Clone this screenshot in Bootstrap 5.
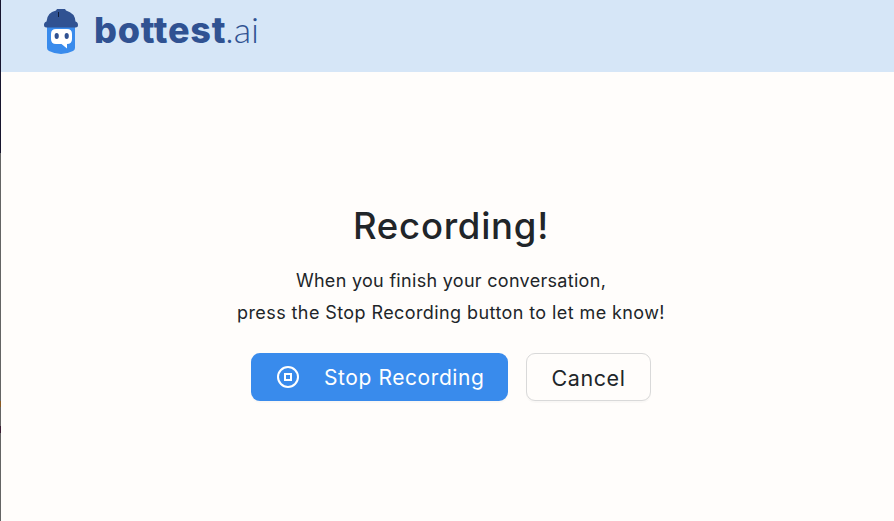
<!DOCTYPE html>
<html lang="en">
<head>
<meta charset="utf-8">
<meta name="viewport" content="width=device-width, initial-scale=1">
<title>bottest.ai</title>
<link href="https://cdn.jsdelivr.net/npm/bootstrap@5.3.0/dist/css/bootstrap.min.css" rel="stylesheet">
<style>
body{background:#fffdfb;color:#212529;font-family:Inter,"Open Sans",sans-serif;height:521px;overflow:hidden}
.edge{width:1px;background:linear-gradient(#17152e 0 153px,#646464 153px 401px,#8a5a22 401px 407px,#646464 407px 426px,#3b1d33 426px 433px,#646464 433px)}
.topbar{height:72px;background:#d6e6f7;padding-left:41px}
.brand{color:#305292;font-size:35px;line-height:46px;margin-left:15px;padding-top:6px}
.brand-a{font-weight:800;font-size:36px;letter-spacing:.75px}
.brand-b{font-family:Lato,sans-serif;font-weight:300;font-size:36px;margin-left:-1px}
.logo{margin-top:8px}
.content{padding:131px 0 0 7px}
.title{font-size:36.5px;line-height:46px;font-weight:500;letter-spacing:.75px}
.msg{font-size:18px;line-height:32px;font-weight:400;margin-top:16px}
.msg span{display:block}
.l1{letter-spacing:.3px}
.l2{letter-spacing:.41px}
.actions{gap:18px;margin-top:24px}
.act{height:48px;border-radius:9px;font-size:21px;line-height:24px;box-shadow:0 2px 1px rgba(0,0,0,.025);padding:2px 0 0}
.stop{width:257px;background:#398bec;color:#fff;padding-left:25px;letter-spacing:.58px}
.stop:hover{background:#2b7cdd;color:#fff}
.stop svg{margin:-2px 24px 0 0}
.cancel{width:125px;background:#fffdfb;border:1px solid #d9d9d9;font-size:21.5px;font-weight:400;letter-spacing:.6px}
</style>
<script src="https://cdn.jsdelivr.net/npm/bootstrap@5.3.0/dist/js/bootstrap.bundle.min.js"></script>
</head>
<body class="d-flex">
<div class="edge flex-shrink-0"></div>
<div class="flex-grow-1">
<header class="topbar d-flex align-items-start">
<svg class="logo" width="37" height="46" viewBox="42 8 37 46" aria-hidden="true">
<path d="M47 27H75V48Q75 50 73 51Q61 57 49 51Q47 50 47 48Z" fill="#398bec"/>
<path d="M46.500 21.500Q47 12.500 56 10.500L57 9H65L66 10.500Q75 13 75.500 21.500Q78 22 78 25Q78 27.500 75.500 27.500H46.500Q44 27.500 44 25Q44 22 46.500 21.500Z" fill="#305292"/>
<path d="M58.500 12V17" stroke="#101c38" stroke-width="1"/>
<path d="M56 29H67Q72 29 72 34V39Q72 44 67 44V48.500L61.500 44H56Q51 44 51 39V34Q51 29 56 29Z" fill="#fff"/>
<ellipse cx="56.700" cy="36" rx="2.100" ry="3" fill="#305292"/><ellipse cx="66.700" cy="36" rx="2.100" ry="3" fill="#305292"/>
</svg>
<div class="brand text-nowrap"><span class="brand-a">bottest</span><span class="brand-b">.ai</span></div>
</header>
<main class="content text-center">
<h1 class="title mb-0">Recording!</h1>
<p class="msg mb-0"><span class="l1">When you finish your conversation,</span><span class="l2">press the Stop Recording button to let me know!</span></p>
<div class="actions d-flex justify-content-center">
<button type="button" class="btn act stop border-0 d-flex align-items-center"><svg width="24" height="24" viewBox="0 0 24 24" fill="none" stroke="#fff" stroke-width="2" aria-hidden="true"><circle cx="12" cy="12" r="10"/><rect x="9" y="9" width="6" height="6"/></svg><span>Stop Recording</span></button>
<button type="button" class="btn act cancel">Cancel</button>
</div>
</main>
</div>
</body>
</html>
